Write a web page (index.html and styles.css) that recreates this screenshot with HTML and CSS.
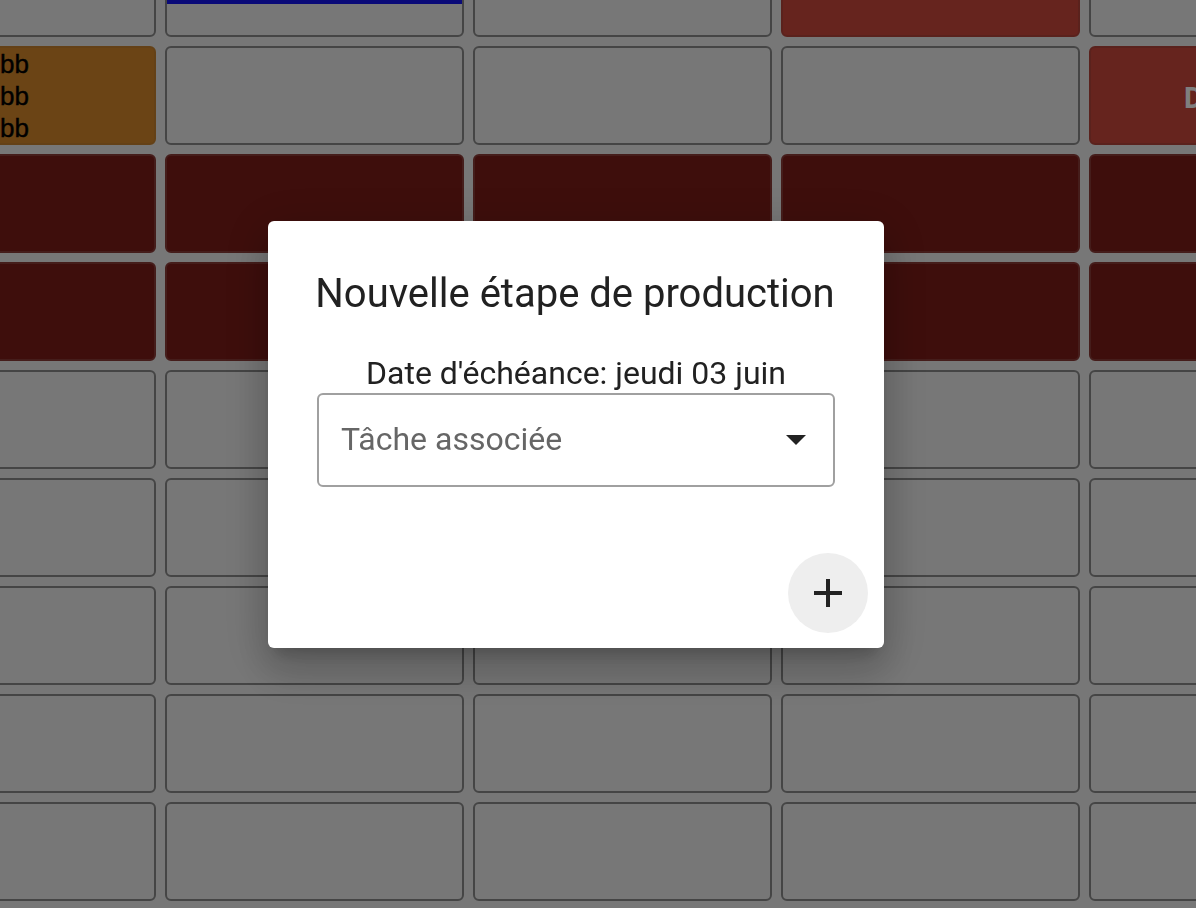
FILE: index.html
```html
<!DOCTYPE html>
<html lang="fr">
<head>
<meta charset="utf-8">
<title>Planning</title>
<link rel="stylesheet" href="styles.css">
</head>
<body>
<div class="board">
  <div class="cell"></div>
  <div class="cell"><div class="bar"></div></div>
  <div class="cell"></div>
  <div class="cell red"></div>
  <div class="cell"></div>

  <div class="cell orange"><div class="label">bb<br>bb<br>bb</div></div>
  <div class="cell"></div>
  <div class="cell"></div>
  <div class="cell"></div>
  <div class="cell red"><div class="tag">D</div></div>

  <div class="cell dark"></div>
  <div class="cell dark"></div>
  <div class="cell dark"></div>
  <div class="cell dark"></div>
  <div class="cell dark"></div>

  <div class="cell dark"></div>
  <div class="cell dark"></div>
  <div class="cell dark"></div>
  <div class="cell dark"></div>
  <div class="cell dark"></div>

  <div class="cell"></div><div class="cell"></div><div class="cell"></div><div class="cell"></div><div class="cell"></div>
  <div class="cell"></div><div class="cell"></div><div class="cell"></div><div class="cell"></div><div class="cell"></div>
  <div class="cell"></div><div class="cell"></div><div class="cell"></div><div class="cell"></div><div class="cell"></div>
  <div class="cell"></div><div class="cell"></div><div class="cell"></div><div class="cell"></div><div class="cell"></div>
  <div class="cell"></div><div class="cell"></div><div class="cell"></div><div class="cell"></div><div class="cell"></div>
</div>

<div class="backdrop">
  <div class="dialog" role="dialog">
    <h2 class="title">Nouvelle étape de production</h2>
    <p class="due">Date d'échéance: jeudi 03 juin</p>
    <div class="select">
      <span class="placeholder">Tâche associée</span>
      <svg class="arrow" viewBox="0 0 24 24" width="48" height="48"><path d="M7 10l5 5 5-5z" fill="#222"/></svg>
    </div>
    <div class="actions">
      <button class="fab" aria-label="Ajouter">
        <svg viewBox="0 0 24 24" width="48" height="48"><path d="M19 13h-6v6h-2v-6H5v-2h6V5h2v6h6v2z" fill="#222"/></svg>
      </button>
    </div>
  </div>
</div>
</body>
</html>
```

FILE: styles.css
```css
html, body {
  margin: 0;
  padding: 0;
  height: 100%;
  overflow: hidden;
}
body {
  background: #eeeeee;
  font-family: Roboto, "Liberation Sans", Arial, sans-serif;
}
.board {
  display: grid;
  grid-template-columns: repeat(5, 299px);
  grid-auto-rows: 99px;
  gap: 9px;
  margin-left: -143px;
  margin-top: -62px;
}
.cell {
  box-sizing: border-box;
  border: 2px solid #8a8a8a;
  border-radius: 6px;
  overflow: hidden;
}
.cell.red {
  background: #cc483c;
  border-color: #b4443a;
}
.cell.dark {
  background: #7c1c18;
  border-color: #8a3a36;
}
.cell.orange {
  background: #d6882a;
  border-color: #c8832e;
}
.bar {
  height: 4px;
  margin: 60px -1px 0;
  background: #1414f0;
}
.label {
  font-family: "Liberation Sans", Arial, sans-serif;
  font-size: 26px;
  font-weight: 400;
  line-height: 32px;
  color: #000;
  text-align: right;
  padding-right: 125px;
  -webkit-text-stroke: 0.4px #000;
}
.tag {
  font-size: 29px;
  font-weight: 700;
  color: #ffffff;
  padding: 33px 0 0 93px;
  line-height: 34px;
  white-space: nowrap;
}
.backdrop {
  position: fixed;
  inset: 0;
  background: rgba(0, 0, 0, 0.5);
  display: flex;
  align-items: flex-start;
  justify-content: flex-start;
  padding: 221px 0 0 268px;
}
.dialog {
  width: 616px;
  height: 427px;
  box-sizing: border-box;
  background: #fff;
  border-radius: 6px;
  padding: 49px 49px 15px 49px;
  display: flex;
  flex-direction: column;
  box-shadow: 0 11px 15px -7px rgba(0,0,0,0.2), 0 24px 38px 3px rgba(0,0,0,0.14), 0 9px 46px 8px rgba(0,0,0,0.12);
}
.title {
  margin: 0;
  font-size: 40px;
  font-weight: 400;
  line-height: 48px;
  color: #212121;
  text-align: center;
  white-space: nowrap;
  margin-left: -2px;
}
.due {
  margin: 37px 0 2px;
  font-size: 32px;
  line-height: 36px;
  color: #212121;
  text-align: center;
}
.select {
  height: 94px;
  box-sizing: border-box;
  border: 2px solid #a0a0a0;
  border-radius: 6px;
  display: flex;
  align-items: center;
  padding: 0 13px 0 22px;
}
.placeholder {
  flex: 1;
  font-size: 32px;
  color: #666;
  margin-top: -2px;
}
.arrow {
  display: block;
  margin-top: -2px;
}
.actions {
  margin-top: auto;
  display: flex;
  justify-content: flex-end;
  margin-right: -33px;
}
.fab {
  width: 80px;
  height: 80px;
  border-radius: 50%;
  border: 0;
  padding: 0;
  background: #eeeeee;
  display: flex;
  align-items: center;
  justify-content: center;
}
.fab svg {
  display: block;
}
```
